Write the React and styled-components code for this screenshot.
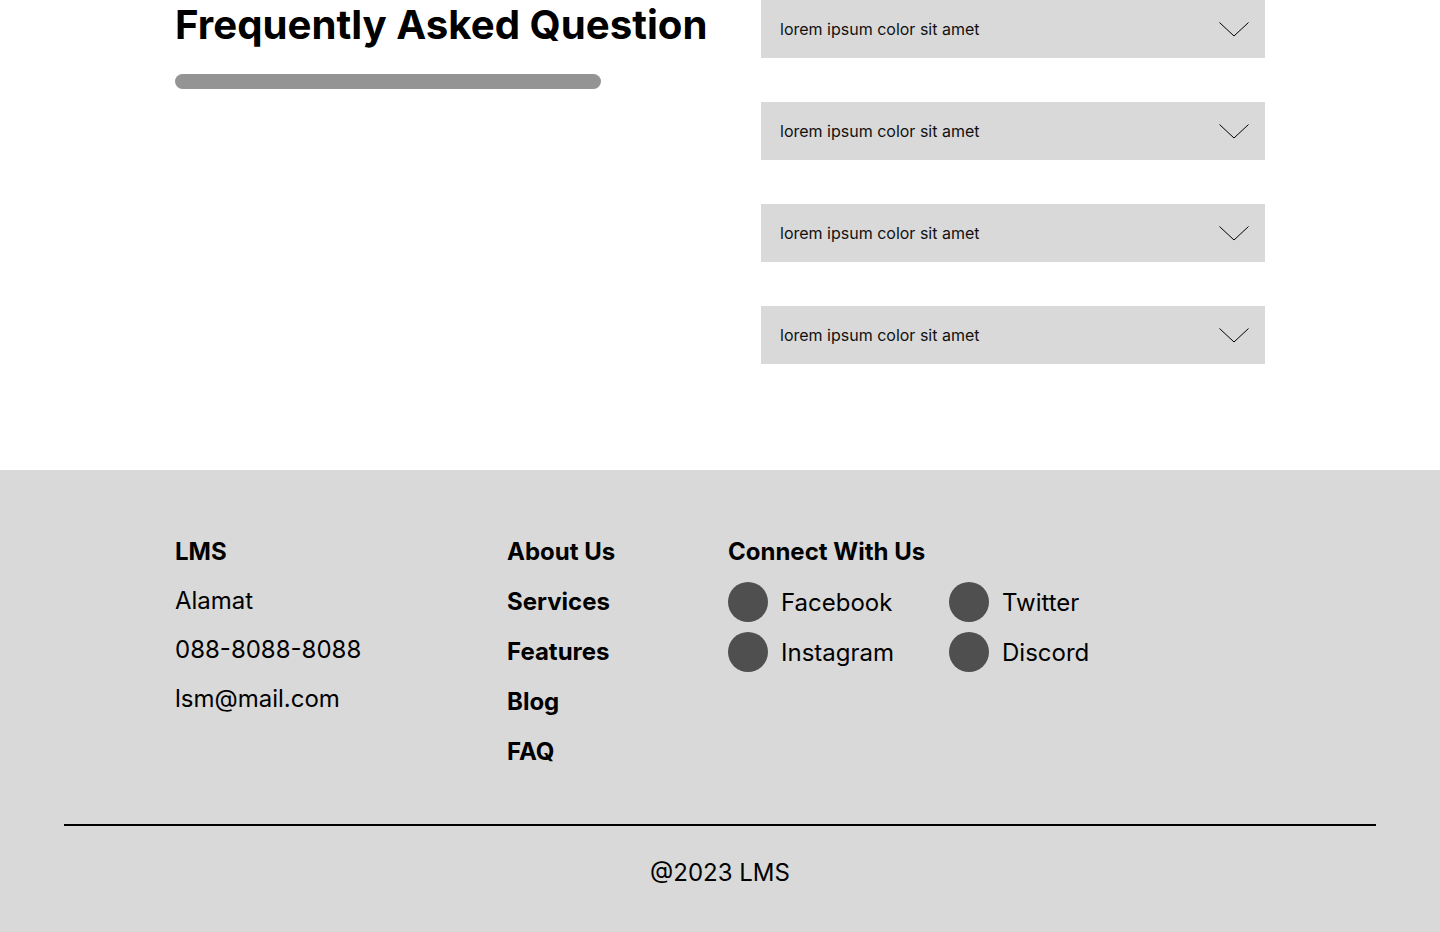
import React from 'react';
import styled, { createGlobalStyle } from 'styled-components';

const GlobalStyle = createGlobalStyle`
    html, body {
        margin: 0;
        padding: 0;
        background: #ffffff;
        font-family: Inter, "Noto Sans", sans-serif;
        color: #000;
    }
`;

const Page = styled.div`
    width: 1440px;
    min-height: 932px;
    display: flex;
    flex-direction: column;
`;

const FaqSection = styled.section`
    display: grid;
    grid-template-columns: 586px 504px;
    justify-content: center;
    padding-bottom: 106px;
`;

const Heading = styled.h2`
    margin: 0;
    font-size: 40.2px;
    line-height: 50px;
    font-weight: 700;
`;

const Underline = styled.div`
    margin-top: 24px;
    width: 426px;
    height: 15px;
    border-radius: 8px;
    background-color: #949494;
`;

const AccordionList = styled.div`
    display: flex;
    flex-direction: column;
    gap: 44px;
`;

const AccordionItem = styled.button`
    height: 58px;
    display: flex;
    align-items: center;
    justify-content: space-between;
    padding: 0 16px 0 19px;
    border: none;
    outline: none;
    background-color: #d9d9d9;
    font-family: inherit;
    font-size: 16px;
    color: #111;
    cursor: pointer;
    text-align: left;
`;

const Chevron = () => (
    <svg width="30" height="16" viewBox="0 0 30 16">
        <polyline points="0.5,1.5 15,15 29.5,1.5" fill="none" stroke="#000" strokeWidth="1" />
    </svg>
);

const Footer = styled.footer`
    background-color: #d9d9d9;
    padding: 67px 64px 45px;
    margin-top: auto;
`;

const FooterColumns = styled.div`
    display: grid;
    grid-template-columns: 332px 221px auto;
    padding-left: 111px;
`;

const Column = styled.div`
    display: flex;
    flex-direction: column;
    gap: ${props => props.gap || 20}px;
`;

const Title = styled.div`
    font-size: 24px;
    line-height: 29px;
    font-weight: 700;
`;

const Info = styled.div`
    font-size: 24px;
    line-height: 29px;
    font-weight: 400;
`;

const SocialGrid = styled.div`
    margin-top: 16px;
    display: grid;
    grid-template-columns: 221px auto;
    row-gap: 10px;
`;

const Social = styled.div`
    display: flex;
    align-items: center;
    gap: 13px;
    font-size: 24px;
`;

const Dot = styled.span`
    width: 40px;
    height: 40px;
    border-radius: 50%;
    background-color: #4f4f4f;
`;

const Divider = styled.hr`
    margin: 58px 0 32px;
    border: none;
    height: 2px;
    background-color: #000;
`;

const Copyright = styled.div`
    text-align: center;
    font-size: 24px;
    line-height: 29px;
`;

const questions = [
    'lorem ipsum color sit amet',
    'lorem ipsum color sit amet',
    'lorem ipsum color sit amet',
    'lorem ipsum color sit amet',
];

const links = ['About Us', 'Services', 'Features', 'Blog', 'FAQ'];
const socials = ['Facebook', 'Twitter', 'Instagram', 'Discord'];

const App = () => {
    return (
        <Page>
            <GlobalStyle />
            <FaqSection>
                <div>
                    <Heading>Frequently Asked Question</Heading>
                    <Underline />
                </div>
                <AccordionList>
                    {questions.map((q, i) => (
                        <AccordionItem key={i}>
                            {q}
                            <Chevron />
                        </AccordionItem>
                    ))}
                </AccordionList>
            </FaqSection>
            <Footer>
                <FooterColumns>
                    <Column gap={20}>
                        <Title>LMS</Title>
                        <Info>Alamat</Info>
                        <Info>088-8088-8088</Info>
                        <Info>lsm@mail.com</Info>
                    </Column>
                    <Column gap={21}>
                        {links.map(l => <Title key={l}>{l}</Title>)}
                    </Column>
                    <div>
                        <Title>Connect With Us</Title>
                        <SocialGrid>
                            {socials.map(s => (
                                <Social key={s}><Dot />{s}</Social>
                            ))}
                        </SocialGrid>
                    </div>
                </FooterColumns>
                <Divider />
                <Copyright>@2023 LMS</Copyright>
            </Footer>
        </Page>
    );
};

export default App;
